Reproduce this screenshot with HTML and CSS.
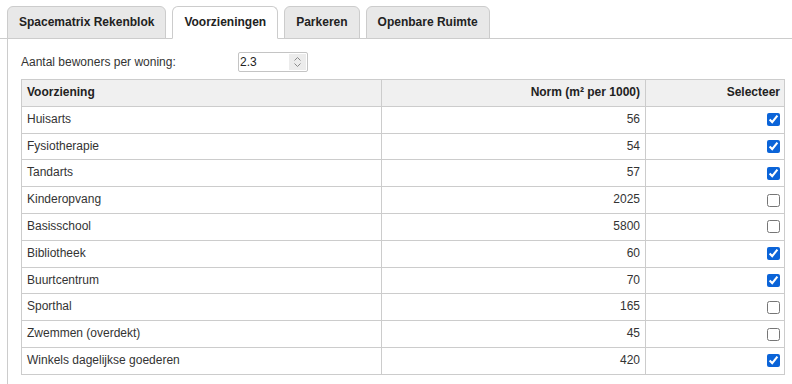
FILE: index.html
```html
<!DOCTYPE html>
<html>
<head lang="nl">
    <meta charset="UTF-8">
    <title>Voorzieningen</title>
    <link rel="stylesheet" href="styles.css">
</head>
<body>
    <div class="tabs">
        <span class="tab">Spacematrix Rekenblok</span>
        <span class="tab active">Voorzieningen</span>
        <span class="tab">Parkeren</span>
        <span class="tab">Openbare Ruimte</span>
    </div>
    <div class="panel">
        <div class="field">
            <label for="bewoners">Aantal bewoners per woning:</label>
            <div class="num">
                <input type="text" id="bewoners" value="2.3">
                <span class="spin">
                    <svg width="9" height="12" viewBox="0 0 9 12">
                        <path d="M1.5 4.5 L4.5 1.5 L7.5 4.5" fill="none" stroke="#8a8a8a" stroke-width="1"/>
                        <path d="M1.5 7.5 L4.5 10.5 L7.5 7.5" fill="none" stroke="#8a8a8a" stroke-width="1"/>
                    </svg>
                </span>
            </div>
        </div>
        <table class="grid">
            <colgroup>
                <col class="c1">
                <col class="c2">
                <col class="c3">
            </colgroup>
            <thead>
                <tr>
                    <th>Voorziening</th>
                    <th class="r">Norm (m² per 1000)</th>
                    <th class="r sel">Selecteer</th>
                </tr>
            </thead>
            <tbody>
                <tr><td>Huisarts</td><td class="r">56</td><td class="r sel"><input type="checkbox" checked></td></tr>
                <tr><td>Fysiotherapie</td><td class="r">54</td><td class="r sel"><input type="checkbox" checked></td></tr>
                <tr><td>Tandarts</td><td class="r">57</td><td class="r sel"><input type="checkbox" checked></td></tr>
                <tr><td>Kinderopvang</td><td class="r">2025</td><td class="r sel"><input type="checkbox"></td></tr>
                <tr><td>Basisschool</td><td class="r">5800</td><td class="r sel"><input type="checkbox"></td></tr>
                <tr><td>Bibliotheek</td><td class="r">60</td><td class="r sel"><input type="checkbox" checked></td></tr>
                <tr><td>Buurtcentrum</td><td class="r">70</td><td class="r sel"><input type="checkbox" checked></td></tr>
                <tr><td>Sporthal</td><td class="r">165</td><td class="r sel"><input type="checkbox"></td></tr>
                <tr><td>Zwemmen (overdekt)</td><td class="r">45</td><td class="r sel"><input type="checkbox"></td></tr>
                <tr><td>Winkels dagelijkse goederen</td><td class="r">420</td><td class="r sel"><input type="checkbox" checked></td></tr>
            </tbody>
        </table>
    </div>
</body>
</html>
```

FILE: styles.css
```css
* {
    padding: 0;
    margin: 0;
    box-sizing: border-box;
}
html, body {
    height: 100%;
    overflow: hidden;
}
body {
    background: #fff;
    font-family: "Liberation Sans", Arial, sans-serif;
    font-size: 12px;
    color: #333;
}
.tabs {
    display: flex;
    gap: 6px;
    padding: 6px 0 0 7px;
    border-bottom: 1px solid #ccc;
}
.tab {
    height: 33px;
    line-height: 31px;
    padding: 0 11px;
    margin-bottom: -1px;
    background: #e8e8e8;
    border: 1px solid #ccc;
    border-radius: 6px 6px 0 0;
    font-weight: bold;
    color: #222;
}
.tab.active {
    background: #fff;
    border-bottom-color: #fff;
}
.panel {
    margin-left: 7px;
    height: 346px;
    border-left: 1px solid #ccc;
    padding: 13px 0 0 13px;
}
.field {
    display: flex;
    align-items: center;
    height: 20px;
}
.field label {
    width: 217px;
}
.num {
    display: flex;
    width: 70px;
    height: 20px;
    border: 1px solid #c4c4c4;
    border-radius: 2px;
    padding: 1px;
}
.num input {
    width: 49px;
    border: none;
    outline: none;
    font: inherit;
    font-size: 12px;
    color: #222;
}
.spin {
    width: 17px;
    background: #ececec;
    display: flex;
    align-items: center;
    justify-content: center;
}
.grid {
    margin-top: 7px;
    width: 763px;
    border-collapse: collapse;
    table-layout: fixed;
}
.c1 { width: 360px; }
.c2 { width: 264px; }
.c3 { width: 139px; }
.grid th, .grid td {
    border: 1px solid #ccc;
    padding: 5px 5px;
    line-height: 15.8px;
    text-align: left;
    white-space: nowrap;
}
.grid th {
    background: #f0f0f0;
    font-weight: bold;
    color: #222;
}
.grid .r {
    text-align: right;
}
.grid .sel {
    padding-right: 4px;
}
.grid input[type=checkbox] {
    margin: 0;
    width: 13px;
    height: 13px;
    vertical-align: middle;
    accent-color: #0b64d8;
}
```
